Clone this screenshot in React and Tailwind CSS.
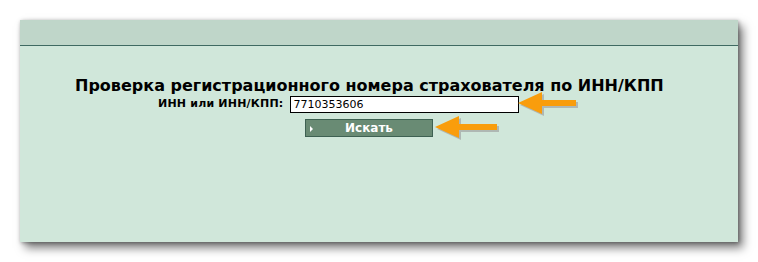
import React from 'react';

function Arrow({ className, length = 58 }) {
    const d = `M0 11 L24 0 L24 8 L${length} 8 L${length} 14 L24 14 L24 22 Z`;
    return (
        <svg className={className} width={length + 4} height="26" viewBox={`0 0 ${length + 4} 26`}>
            <g transform="translate(2 2)" fill="#9a9a9a" opacity="0.6">
                <path d={d} />
            </g>
            <path d={d} fill="#f99d0c" />
        </svg>
    );
}

export default function App() {
    return (
        <div className="w-[758px] h-[262px] bg-white pt-[20px] pl-[20px]" style={{ fontFamily: '"DejaVu Sans", Verdana, sans-serif' }}>
            <div className="relative w-[718px] h-[222px] bg-[#d0e7da] shadow-[1px_1px_4px_rgba(0,0,0,0.35),5px_6px_9px_rgba(0,0,0,0.5)]">
                {/* Top band */}
                <div className="h-[26px] bg-[#bfd6c9] border-b border-[#3f6a62]"></div>

                {/* Form */}
                <div className="flex flex-col pt-[30px]">
                    <h2 className="pl-[55px] text-[16px] leading-[20px] font-bold text-black whitespace-nowrap">
                        Проверка регистрационного номера страхователя по ИНН/КПП
                    </h2>
                    <div className="flex items-center pl-[138px]">
                        <label className="text-[11px] font-bold text-black tracking-[0.2px] mr-[7px]">ИНН или ИНН/КПП:</label>
                        <input
                            type="text"
                            defaultValue="7710353606"
                            className="w-[229px] h-[17px] bg-white border border-black px-[2px] text-[11px] text-black outline-none"
                        />
                    </div>
                    <div className="pl-[285px] mt-[2px]">
                        <button className="relative w-[128px] h-[18px] bg-[#698b74] border border-[#3e6152] text-white text-[12px] font-bold leading-none">
                            <span className="absolute left-[4px] top-[6px] w-0 h-0 border-y-[3px] border-y-transparent border-l-[3px] border-l-white"></span>
                            Искать
                        </button>
                    </div>
                </div>

                {/* Pointer arrows */}
                <Arrow className="absolute left-[498px] top-[72px]" length={58} />
                <Arrow className="absolute left-[415px] top-[96px]" length={62} />
            </div>
        </div>
    );
}
